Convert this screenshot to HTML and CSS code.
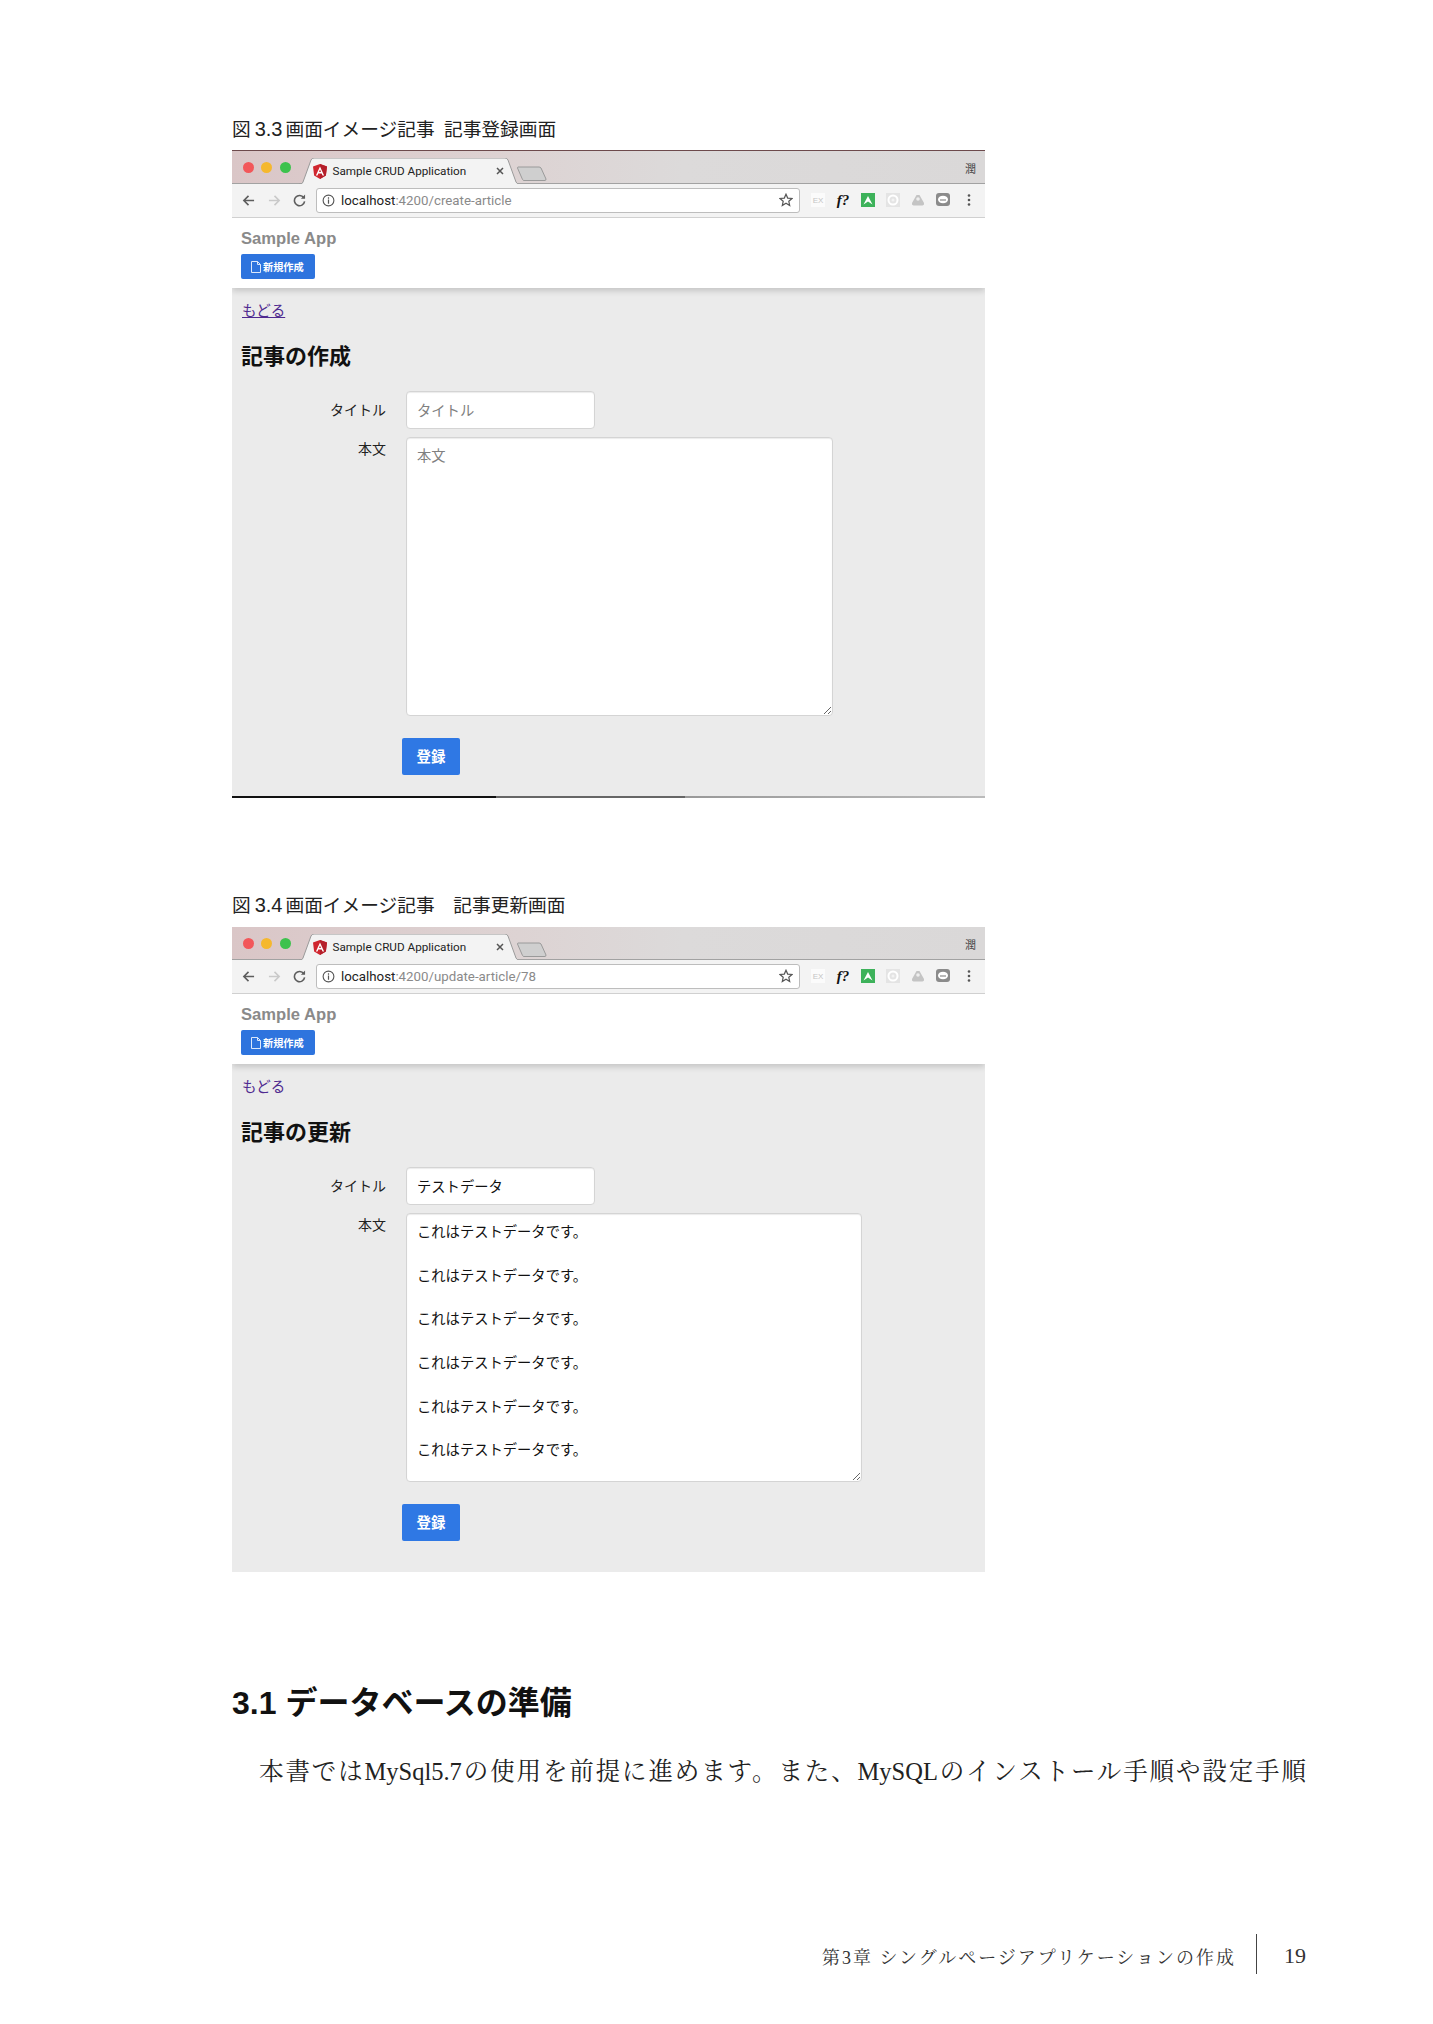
FILE: index.html
```html
<!DOCTYPE html>
<html lang="ja">
<head>
<meta charset="utf-8">
<title>第3章 シングルページアプリケーションの作成</title>
<link rel="stylesheet" href="styles.css">
</head>
<body>
<main class="page">

<figure class="figure figure-create">
  <figcaption class="caption">図<span class="cap-num">3.3</span>画面イメージ記事&ensp;記事登録画面</figcaption>
  <div class="browser browser-dark">
    <div class="strip">
      <div class="lights"><i class="light red"></i><i class="light amber"></i><i class="light green"></i></div>
      <div class="tab">
        <svg class="tab-shape" viewBox="0 0 220 26" preserveAspectRatio="none"><path d="M0 26 H2 Q3 26 4 24 L12 2 Q13 0 15 0 H206 Q208 0 209 2 L217 24 Q218 26 220 26" fill="#f3f3f3" stroke="#9a9a9a"/></svg>
        <svg class="ng" viewBox="0 0 14 15"><path d="M7 0 L14 2.4 L12.9 11.6 L7 15 L1.1 11.6 L0 2.4Z" fill="#d0262f"/><path d="M7 0 L14 2.4 L12.9 11.6 L7 15Z" fill="#b51f2a"/><path d="M7 2.4 L2.9 11.4 H4.5 L5.3 9.4 H8.7 L9.5 11.4 H11.1Z M6 8 L7 5.6 L8 8Z" fill="#fff" fill-rule="evenodd"/></svg>
        <span class="tab-title">Sample CRUD Application</span>
        <svg class="tab-x" viewBox="0 0 8 8"><path d="M1 1 L7 7 M7 1 L1 7" stroke="#555" stroke-width="1.5"/></svg>
      </div>
      <svg class="newtab" viewBox="0 0 30 15"><path d="M1 1 H22 Q23 1 24 2 L29 13 Q29 14.5 28 14.5 H7 Q6 14.5 5.5 13.5 L.5 2 Q.5 1 1 1Z" fill="#cfcfcf" stroke="#9a9a9a"/></svg>
      <span class="profile">潤</span>
    </div>
    <div class="toolbar">
      <svg class="nav" viewBox="0 0 14 14"><path d="M13 7 H2 M7 2 L2 7 L7 12" fill="none" stroke="#5d5d5d" stroke-width="1.7"/></svg>
      <svg class="nav" viewBox="0 0 14 14"><path d="M1 7 H12 M7 2 L12 7 L7 12" fill="none" stroke="#c9c9c9" stroke-width="1.7"/></svg>
      <svg class="nav" viewBox="0 0 14 14"><path d="M11.6 4 A5.5 5.5 0 1 0 12.5 8" fill="none" stroke="#5d5d5d" stroke-width="1.7"/><path d="M8.5 5 H13 V.5Z" fill="#5d5d5d"/></svg>
      <div class="omnibox">
        <svg class="info" viewBox="0 0 14 14"><circle cx="7" cy="7" r="5.8" fill="none" stroke="#555" stroke-width="1.2"/><path d="M7 6 V10.5 M7 3.5 V5" stroke="#555" stroke-width="1.3"/></svg>
        <span class="url"><b class="host">localhost</b>:4200/create-article</span>
        <svg class="star" viewBox="0 0 14 14"><path d="M7 1.2 L8.7 5.1 L13 5.5 L9.8 8.3 L10.7 12.5 L7 10.3 L3.3 12.5 L4.2 8.3 L1 5.5 L5.3 5.1Z" fill="none" stroke="#555" stroke-width="1.2"/></svg>
      </div>
      <div class="exts">
        <span class="ext ext-ex">EX</span>
        <span class="ext ext-f">f?</span>
        <svg class="ext" viewBox="0 0 14 14"><rect width="14" height="14" fill="#3db25a"/><path d="M2.5 11.5 L7 3 L11.5 11.5 L7 8.5Z" fill="#fff"/></svg>
        <svg class="ext" viewBox="0 0 14 14"><rect width="14" height="14" fill="#e4e4e4"/><circle cx="7" cy="7" r="4.5" fill="none" stroke="#fff" stroke-width="2"/><circle cx="7" cy="7" r="1.5" fill="#f3f3f3"/></svg>
        <svg class="ext" viewBox="0 0 14 14"><path d="M5.5 2 H8.5 L13 10 A2 2 0 0 1 11.5 12.5 H2.5 A2 2 0 0 1 1 10Z" fill="#c4c4c4"/><circle cx="7" cy="6" r="1.8" fill="#eee"/></svg>
        <svg class="ext" viewBox="0 0 14 14"><rect width="14" height="13" rx="3" fill="#8b8b8b"/><ellipse cx="7" cy="6.5" rx="5" ry="3.8" fill="#fff"/><path d="M4 7 H10" stroke="#8b8b8b" stroke-width="1.2"/></svg>
        <svg class="ext ext-menu" viewBox="0 0 4 14"><circle cx="2" cy="2.5" r="1.3" fill="#555"/><circle cx="2" cy="7" r="1.3" fill="#555"/><circle cx="2" cy="11.5" r="1.3" fill="#555"/></svg>
      </div>
    </div>
    <header class="app-head">
      <div class="brand">Sample App</div>
      <a class="new-btn"><svg class="doc" viewBox="0 0 10 12"><path d="M.5 .5 H6.5 L9.5 3.5 V11.5 H.5Z M6.5 .5 V3.5 H9.5" fill="none" stroke="#dce8fb" stroke-width="1"/></svg>新規作成</a>
    </header>
    <section class="content">
      <a class="back back-line">もどる</a>
      <h2 class="form-title">記事の作成</h2>
      <form class="form">
        <label class="lbl">タイトル</label>
        <input class="field field-title" placeholder="タイトル">
        <label class="lbl lbl-top">本文</label>
        <textarea class="field area area-create" placeholder="本文"></textarea>
        <button class="save" type="button">登録</button>
      </form>
    </section>
    <div class="edge"><i class="edge-a"></i><i class="edge-b"></i><i class="edge-c"></i></div>
  </div>
</figure>

<figure class="figure figure-update">
  <figcaption class="caption">図<span class="cap-num">3.4</span>画面イメージ記事　記事更新画面</figcaption>
  <div class="browser browser-clean">
    <div class="strip">
      <div class="lights"><i class="light red"></i><i class="light amber"></i><i class="light green"></i></div>
      <div class="tab">
        <svg class="tab-shape" viewBox="0 0 220 26" preserveAspectRatio="none"><path d="M0 26 H2 Q3 26 4 24 L12 2 Q13 0 15 0 H206 Q208 0 209 2 L217 24 Q218 26 220 26" fill="#f3f3f3" stroke="#9a9a9a"/></svg>
        <svg class="ng" viewBox="0 0 14 15"><path d="M7 0 L14 2.4 L12.9 11.6 L7 15 L1.1 11.6 L0 2.4Z" fill="#d0262f"/><path d="M7 0 L14 2.4 L12.9 11.6 L7 15Z" fill="#b51f2a"/><path d="M7 2.4 L2.9 11.4 H4.5 L5.3 9.4 H8.7 L9.5 11.4 H11.1Z M6 8 L7 5.6 L8 8Z" fill="#fff" fill-rule="evenodd"/></svg>
        <span class="tab-title">Sample CRUD Application</span>
        <svg class="tab-x" viewBox="0 0 8 8"><path d="M1 1 L7 7 M7 1 L1 7" stroke="#555" stroke-width="1.5"/></svg>
      </div>
      <svg class="newtab" viewBox="0 0 30 15"><path d="M1 1 H22 Q23 1 24 2 L29 13 Q29 14.5 28 14.5 H7 Q6 14.5 5.5 13.5 L.5 2 Q.5 1 1 1Z" fill="#cfcfcf" stroke="#9a9a9a"/></svg>
      <span class="profile">潤</span>
    </div>
    <div class="toolbar">
      <svg class="nav" viewBox="0 0 14 14"><path d="M13 7 H2 M7 2 L2 7 L7 12" fill="none" stroke="#5d5d5d" stroke-width="1.7"/></svg>
      <svg class="nav" viewBox="0 0 14 14"><path d="M1 7 H12 M7 2 L12 7 L7 12" fill="none" stroke="#c9c9c9" stroke-width="1.7"/></svg>
      <svg class="nav" viewBox="0 0 14 14"><path d="M11.6 4 A5.5 5.5 0 1 0 12.5 8" fill="none" stroke="#5d5d5d" stroke-width="1.7"/><path d="M8.5 5 H13 V.5Z" fill="#5d5d5d"/></svg>
      <div class="omnibox">
        <svg class="info" viewBox="0 0 14 14"><circle cx="7" cy="7" r="5.8" fill="none" stroke="#555" stroke-width="1.2"/><path d="M7 6 V10.5 M7 3.5 V5" stroke="#555" stroke-width="1.3"/></svg>
        <span class="url"><b class="host">localhost</b>:4200/update-article/78</span>
        <svg class="star" viewBox="0 0 14 14"><path d="M7 1.2 L8.7 5.1 L13 5.5 L9.8 8.3 L10.7 12.5 L7 10.3 L3.3 12.5 L4.2 8.3 L1 5.5 L5.3 5.1Z" fill="none" stroke="#555" stroke-width="1.2"/></svg>
      </div>
      <div class="exts">
        <span class="ext ext-ex">EX</span>
        <span class="ext ext-f">f?</span>
        <svg class="ext" viewBox="0 0 14 14"><rect width="14" height="14" fill="#3db25a"/><path d="M2.5 11.5 L7 3 L11.5 11.5 L7 8.5Z" fill="#fff"/></svg>
        <svg class="ext" viewBox="0 0 14 14"><rect width="14" height="14" fill="#e4e4e4"/><circle cx="7" cy="7" r="4.5" fill="none" stroke="#fff" stroke-width="2"/><circle cx="7" cy="7" r="1.5" fill="#f3f3f3"/></svg>
        <svg class="ext" viewBox="0 0 14 14"><path d="M5.5 2 H8.5 L13 10 A2 2 0 0 1 11.5 12.5 H2.5 A2 2 0 0 1 1 10Z" fill="#c4c4c4"/><circle cx="7" cy="6" r="1.8" fill="#eee"/></svg>
        <svg class="ext" viewBox="0 0 14 14"><rect width="14" height="13" rx="3" fill="#8b8b8b"/><ellipse cx="7" cy="6.5" rx="5" ry="3.8" fill="#fff"/><path d="M4 7 H10" stroke="#8b8b8b" stroke-width="1.2"/></svg>
        <svg class="ext ext-menu" viewBox="0 0 4 14"><circle cx="2" cy="2.5" r="1.3" fill="#555"/><circle cx="2" cy="7" r="1.3" fill="#555"/><circle cx="2" cy="11.5" r="1.3" fill="#555"/></svg>
      </div>
    </div>
    <header class="app-head">
      <div class="brand">Sample App</div>
      <a class="new-btn"><svg class="doc" viewBox="0 0 10 12"><path d="M.5 .5 H6.5 L9.5 3.5 V11.5 H.5Z M6.5 .5 V3.5 H9.5" fill="none" stroke="#dce8fb" stroke-width="1"/></svg>新規作成</a>
    </header>
    <section class="content">
      <a class="back">もどる</a>
      <h2 class="form-title">記事の更新</h2>
      <form class="form">
        <label class="lbl">タイトル</label>
        <input class="field field-title" value="テストデータ">
        <label class="lbl lbl-top">本文</label>
        <textarea class="field area area-update">これはテストデータです。

これはテストデータです。

これはテストデータです。

これはテストデータです。

これはテストデータです。

これはテストデータです。</textarea>
        <button class="save" type="button">登録</button>
      </form>
    </section>
  </div>
</figure>

<h1 class="section-title">3.1 データベースの準備</h1>
<p class="body-text">本書ではMySql5.7の使用を前提に進めます。また、MySQLのインストール手順や設定手順</p>

<footer class="running-foot">
  <span class="foot-title">第3章 シングルページアプリケーションの作成</span>
  <span class="foot-rule"></span>
  <span class="foot-page">19</span>
</footer>

</main>
</body>
</html>
```
FILE: styles.css
```css
* { box-sizing: border-box; }
html, body { margin: 0; background: #fff; }
body { font-family: "Noto Sans CJK JP", sans-serif; color: #111; }

.page {
  width: 1433px;
  min-height: 2024px;
  padding: 115px 127px 0 232px;
  display: flex;
  flex-direction: column;
}

.figure { margin: 0; width: 753px; }
.figure-update { margin-top: 93px; }

.caption {
  height: 26px;
  line-height: 25px;
  font-size: 18.7px;
  color: #222;
  margin-bottom: 9px;
  white-space: nowrap;
}
.cap-num { font-family: "Liberation Sans", sans-serif; font-size: 20px; margin: 0 3px 0 4px; }

.browser {
  display: flex;
  flex-direction: column;
  background: #ebebeb;
  font-family: "Liberation Sans", "Noto Sans CJK JP", sans-serif;
}
.browser-dark { border-top: 1px solid #6d4a4c; }
.browser-clean { border-top: 1px solid #fff; }

/* tab strip */
.strip {
  height: 33px;
  display: flex;
  align-items: flex-start;
  position: relative;
  background: linear-gradient(90deg, #dac6c7 0, #ddd2d2 35%, #dcdada 60%, #dad8d8 100%);
  border-bottom: 1px solid #a2a2a2;
}
.lights { display: flex; gap: 7.5px; margin: 11px 0 0 10.5px; }
.light { width: 11px; height: 11px; border-radius: 50%; display: block; }
.red { background: #f2575a; }
.amber { background: #f5b82e; }
.green { background: #3dc24d; }

.tab {
  position: relative;
  width: 220px;
  height: 26px;
  margin: 7px 0 0 8px;
  display: flex;
  align-items: center;
  padding: 0 0 0 14px;
  flex: none;
}
.tab-shape { position: absolute; inset: 0; width: 100%; height: 100%; }
.ng { position: relative; width: 14px; height: 15px; flex: none; }
.tab-title {
  position: relative;
  margin-left: 6px;
  width: 150px;
  font-family: Roboto, sans-serif;
  font-size: 11.7px;
  color: #222;
  white-space: nowrap;
}
.tab-x { position: relative; width: 8px; height: 8px; margin-left: 13px; flex: none; }
.newtab { width: 30px; height: 15px; margin: 15px 0 0 -2px; flex: none; }
.profile { margin: 11px 0 0 auto; padding-right: 9px; font-size: 11px; color: #444; line-height: 14px; }

/* toolbar */
.toolbar {
  height: 34px;
  display: flex;
  align-items: center;
  background: #f3f3f3;
  border-bottom: 1px solid #d0d0d0;
  padding: 0 0 1px 10px;
}
.nav { width: 13px; height: 13px; margin-right: 13px; flex: none; }
.nav:nth-child(2) { margin-right: 12px; }
.nav:nth-child(3) { margin-right: 10px; }
.omnibox {
  width: 484px;
  height: 25px;
  display: flex;
  align-items: center;
  background: #fff;
  border: 1px solid #bdbdbd;
  border-radius: 3px;
  padding: 0 6px 0 5px;
  flex: none;
}
.info { width: 13px; height: 13px; flex: none; }
.url {
  margin-left: 6px;
  flex: 1;
  font-family: Roboto, sans-serif;
  font-size: 13.3px;
  color: #8a8a8a;
  white-space: nowrap;
}
.host { font-weight: 400; color: #222; }
.star { width: 14px; height: 14px; flex: none; }
.exts { display: flex; align-items: center; margin-left: 11px; }
.ext {
  width: 14px;
  height: 14px;
  margin-right: 11px;
  flex: none;
  display: flex;
  align-items: center;
  justify-content: center;
}
.ext-ex { background: #fbfbfb; color: #c4c4c4; font-size: 8px; }
.ext-f { font-family: "Liberation Serif", serif; font-style: italic; font-weight: 700; font-size: 15px; color: #111; }
.ext-menu { width: 4px; margin: 0 0 0 6px; }

/* application header */
.app-head {
  height: 70px;
  background: #fff;
  padding: 11px 9px 0;
  box-shadow: 0 3px 6px rgba(0, 0, 0, .16);
  clip-path: inset(0 0 -12px 0);
  position: relative;
}
.brand { font-size: 16.6px; line-height: 20px; font-weight: 700; color: #8a8a8a; }
.new-btn {
  display: flex;
  align-items: center;
  width: 74px;
  height: 25px;
  margin-top: 5px;
  padding-left: 10px;
  background: #2e74de;
  border-radius: 2px;
  color: #fff;
  font-size: 10.2px;
  font-weight: 700;
  white-space: nowrap;
}
.doc { width: 10px; height: 12px; margin-right: 2px; flex: none; }

/* page content */
.content { padding: 13px 9px 21px; }
.figure-update .content { padding-bottom: 31px; }
.back { display: block; width: max-content; height: 20px; line-height: 20px; margin-left: 1px; font-size: 14.5px; color: #4f2a90; }
.back-line { text-decoration: underline; }
.form-title {
  margin: 21px 0 19px;
  height: 30px;
  line-height: 30px;
  font-size: 22px;
  font-weight: 700;
  color: #111;
}

.form {
  display: grid;
  grid-template-columns: 145px 1fr;
  column-gap: 20px;
  row-gap: 8px;
  align-items: start;
}
.lbl { font-size: 14px; line-height: 38px; text-align: right; color: #222; }
.lbl-top { line-height: 24px; }
.field {
  font-family: "Noto Sans CJK JP", sans-serif;
  font-size: 14.3px;
  color: #111;
  background: #fff;
  border: 1px solid #d4d4d4;
  border-radius: 4px;
  box-shadow: inset 0 1px 1px rgba(0, 0, 0, .08);
  padding: 0 10px 2px;
  display: block;
  outline: 0;
}
.field::placeholder { color: #808080; opacity: 1; }
.field-title { width: 189px; height: 38px; }
.area { padding: 6px 10px; line-height: 21.85px; overflow: hidden; }
.area-create { width: 427px; height: 279px; }
.area-update { width: 456px; height: 269px; }
.save {
  grid-column: 2;
  width: 58px;
  height: 37px;
  margin: 14px 0 0 -4px;
  padding: 0 0 3px;
  border: 0;
  border-radius: 2px;
  background: #2f78e4;
  color: #fff;
  font-family: "Noto Sans CJK JP", sans-serif;
  font-size: 14.5px;
  font-weight: 700;
}

.edge { height: 2px; display: flex; }
.edge i { display: block; height: 100%; }
.edge-a { width: 264px; background: #111; }
.edge-b { width: 189px; background: #666; }
.edge-c { flex: 1; background: linear-gradient(90deg, #999, #bbb); }

/* book text */
.section-title {
  margin: 111px 0 0;
  height: 40px;
  line-height: 40px;
  font-family: "Liberation Sans", "Noto Sans CJK JP", sans-serif;
  font-size: 32px;
  font-weight: 700;
  color: #111;
  white-space: nowrap;
}
.body-text {
  margin: 31px 0 0;
  padding-left: 27px;
  height: 36px;
  line-height: 36px;
  font-family: "Liberation Serif", "Noto Serif CJK JP", "Noto Sans CJK JP", serif;
  font-size: 24.5px;
  color: #222;
  text-align: justify;
  text-align-last: justify;
  white-space: nowrap;
}
.running-foot {
  margin-top: 144px;
  display: flex;
  align-items: center;
  justify-content: flex-end;
  height: 40px;
}
.foot-title {
  padding-top: 3px;
  font-family: "Liberation Serif", "Noto Serif CJK JP", "Noto Sans CJK JP", serif;
  font-size: 18px;
  letter-spacing: 2px;
  color: #333;
  white-space: nowrap;
}
.foot-rule { width: 1px; height: 40px; background: #444; margin: 0 27px 0 20px; }
.foot-page { padding-top: 3px; font-family: "Liberation Serif", serif; font-size: 22px; color: #333; }
```
